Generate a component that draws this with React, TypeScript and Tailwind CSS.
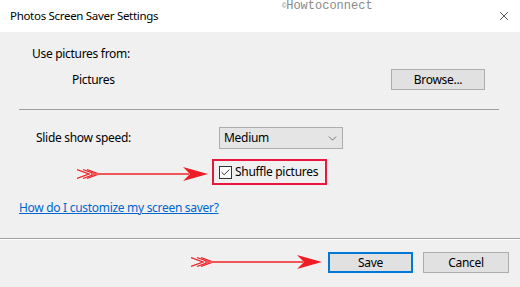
import { X, ChevronDown, Check } from 'lucide-react';

const font = { fontFamily: '"Noto Sans", "Liberation Sans", sans-serif' };

function RedArrow() {
  return (
    <svg width="132" height="16" viewBox="0 0 132 16">
      <path d="M0 3.5 L12 8 L0 12.5 M6 3.5 L18 8 L6 12.5 M10 3.5 L22 8 L10 12.5" fill="none" stroke="#ee1c24" strokeWidth="1.3" />
      <path d="M14 8 L112 8" stroke="#f25757" strokeWidth="2" />
      <path d="M106 1 L131 8 L106 15 L113 8 Z" fill="#ee1c24" />
    </svg>
  );
}

function Button({ label, primary }: { label: string; primary?: boolean }) {
  return (
    <button
      className={`h-[21px] flex items-center justify-center bg-[#e1e1e1] text-[12px] tracking-[-0.3px] text-black ${
        primary ? 'w-[85px] border-2 border-[#0078d7]' : 'w-[86px] border border-[#adadad]'
      }`}
    >
      {label}
    </button>
  );
}

export default function App() {
  return (
    <div
      className="relative w-[520px] h-[287px] overflow-hidden bg-[#f0f0f0] text-[12px] tracking-[-0.3px] text-black"
      style={font}
    >
      <div className="h-[32px] bg-white flex items-center justify-between pl-[10px] pr-[9px]">
        <span className="text-[11.5px]">Photos Screen Saver Settings</span>
        <X className="w-[14px] h-[14px] text-[#111]" strokeWidth={1.2} />
      </div>
      <div
        className="absolute left-[282px] top-0 text-[12px] tracking-normal text-[#8a8a8a] leading-[12px]"
        style={{ fontFamily: '"Liberation Mono", monospace' }}
      >
        <span className="text-[7px] align-top">©</span>Howtoconnect
      </div>

      <div className="pl-[32px] mt-[14px] leading-[16px]">Use pictures from:</div>

      <div className="flex items-center justify-between pl-[72px] pr-[35px] mt-[7px]">
        <span>Pictures</span>
        <button className="w-[94px] h-[21px] bg-[#e1e1e1] border border-[#adadad] text-[12px]">Browse...</button>
      </div>

      <div className="ml-[19px] mr-[21px] mt-[19px] h-px bg-[#a0a0a0]" />

      <div className="flex items-center mt-[17px]">
        <span className="pl-[36px] w-[219px]">Slide show speed:</span>
        <div className="w-[124px] h-[22px] bg-[#e5e5e5] border border-[#adadad] flex items-center justify-between pl-[4px] pr-[3px]">
          <span>Medium</span>
          <ChevronDown className="w-[13px] h-[13px] text-[#333]" strokeWidth={1.2} />
        </div>
      </div>

      <div className="flex mt-[10px] pl-[212px]">
        <div className="h-[26px] w-[115px] whitespace-nowrap border-2 border-[#e8173c] flex items-center pl-[5px] gap-[3px]">
          <div className="w-[13px] h-[13px] border border-[#333] bg-white flex items-center justify-center">
            <Check className="w-[11px] h-[11px] text-[#222]" strokeWidth={2} />
          </div>
          <span>Shuffle pictures</span>
        </div>
      </div>

      <div className="pl-[19px] mt-[15px] leading-[16px]">
        <span className="text-[#0066cc] underline">How do I customize my screen saver?</span>
      </div>

      <div className="mt-[22px] h-px bg-[#a0a0a0] border-b border-white box-content" />

      <div className="flex justify-end gap-[10px] pr-[11px] mt-[12px]">
        <Button label="Save" primary />
        <Button label="Cancel" />
      </div>

      <div className="absolute left-[77px] top-[166px]">
        <RedArrow />
      </div>
      <div className="absolute left-[191px] top-[254px]">
        <RedArrow />
      </div>
    </div>
  );
}
